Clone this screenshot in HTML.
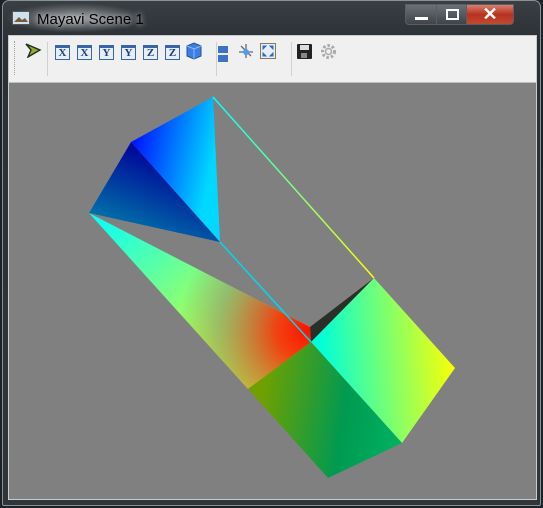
<!DOCTYPE html><html><head><style>
body{margin:0;width:543px;height:508px;background:#1c2328;position:relative;overflow:hidden;font-family:"Liberation Sans",sans-serif}
.win{position:absolute;left:2px;top:0;width:539px;height:506px;border-radius:7px 7px 2px 2px;background:linear-gradient(#3a3f44,#2b3035 40px,#30353a);border:1px solid #8a9096;box-sizing:border-box}
.title{position:absolute;left:34px;top:10px;font-size:15px;color:#000;text-shadow:0 0 6px rgba(255,255,255,.9)}
.glow{position:absolute;left:2px;top:2px;width:140px;height:30px;background:radial-gradient(ellipse at center,rgba(255,255,255,.5),rgba(255,255,255,0) 70%)}
.client{position:absolute;left:8px;top:35px;width:527px;height:463px;border:1px solid #c8ccd0;background:#808080}
.tb{position:absolute;left:0;top:0;width:527px;height:46px;background:#f0f0f0;border-bottom:1px solid #c0c0c0}
.sep{position:absolute;top:6px;width:1px;height:34px;background:#d0d0d0}
.ib{position:absolute;top:9px;width:13px;height:13px;border:1px solid #3a64a8;background:#e8eef8;font:bold 11px "Liberation Serif",serif;color:#1c3f80;text-align:center;line-height:15px;box-sizing:content-box}
.ib:before{content:"";position:absolute;left:0;top:0;right:0;height:2px;background:#3a64a8}
.btn{position:absolute;top:3px;height:21px;border:1px solid #5a5e62;box-sizing:border-box}
</style></head><body>
<div class="win">
<div class="glow"></div>
<svg style="position:absolute;left:9px;top:10px" width="18" height="14"><rect x=".5" y=".5" width="17" height="13" fill="#cfe0f0" stroke="#555"/><path d="M2 11 L7 6 L10 9 L13 7 L16 11Z" fill="#7a5a3a"/></svg>
<div class="title">Mayavi Scene 1</div>
<div class="btn" style="left:402px;width:32px;border-radius:0 0 0 4px;background:linear-gradient(#6a7076,#3e4449)"><div style="position:absolute;left:9px;top:12px;width:13px;height:3px;background:#fff"></div></div>
<div class="btn" style="left:433px;width:31px;background:linear-gradient(#6a7076,#3e4449)"><div style="position:absolute;left:9px;top:4px;width:9px;height:7px;border:2px solid #fff"></div></div>
<div class="btn" style="left:463px;width:48px;border-radius:0 0 4px 0;background:linear-gradient(#d88070,#b8321e 50%,#c04a30)"><div style="position:absolute;left:0;width:100%;top:-1px;color:#fff;font:bold 18px 'Liberation Sans';text-align:center">✕</div></div>
</div>
<div class="client">
<div class="tb">
<div style="position:absolute;left:5px;top:5px;width:1px;height:34px;border-left:1px dotted #a0a0a0"></div>
<svg style="position:absolute;left:15px;top:6px" width="18" height="16"><path d="M2 2 L16 8 L4 15 L7 8Z" fill="#9aa830" stroke="#1a3020" stroke-width="1.4"/></svg>
<div class="sep" style="left:38px"></div>
<div class="ib" style="left:46px">X</div><div class="ib" style="left:68px">X</div><div class="ib" style="left:90px">Y</div><div class="ib" style="left:112px">Y</div><div class="ib" style="left:134px">Z</div><div class="ib" style="left:156px">Z</div>
<svg style="position:absolute;left:176px;top:6px" width="18" height="18"><path d="M2 4 L9 1 L16 4 L16 14 L9 17 L2 14Z" fill="#3f7ee0" stroke="#2050a0"/><path d="M2 4 L9 7 L16 4 M9 7 V17" stroke="#8ab8ff" fill="none"/></svg>
<div class="sep" style="left:207px"></div>
<div style="position:absolute;left:209px;top:10px;width:10px;height:7px;background:#3d72c8"></div><div style="position:absolute;left:209px;top:19px;width:10px;height:7px;background:#3d72c8"></div>
<svg style="position:absolute;left:229px;top:7px" width="16" height="16"><path d="M8 1V15M1 9H15M3 3L13 13" stroke="#667" stroke-width="1.3"/><circle cx="8" cy="9" r="3" fill="#4aa0f0"/></svg>
<svg style="position:absolute;left:251px;top:7px" width="16" height="16"><rect x=".5" y=".5" width="15" height="15" fill="#e8eef8" stroke="#8a7a50"/><path d="M3 3L6 3L3 6ZM13 3L10 3L13 6ZM3 13L6 13L3 10ZM13 13L10 13L13 10Z" fill="#2a6ac0" stroke="#2a6ac0"/></svg>
<div class="sep" style="left:282px"></div>
<svg style="position:absolute;left:288px;top:8px" width="15" height="15"><rect width="15" height="15" rx="1" fill="#222"/><rect x="3" y="1" width="9" height="5" fill="#ddd"/><rect x="4" y="9" width="6" height="5" fill="#888"/></svg>
<svg style="position:absolute;left:311px;top:7px" width="17" height="17"><circle cx="8.5" cy="8.5" r="6" fill="none" stroke="#aaa" stroke-width="3" stroke-dasharray="2.5 2"/><circle cx="8.5" cy="8.5" r="3" fill="none" stroke="#aaa" stroke-width="1.5"/></svg>
</div>
</div>
<svg style="position:absolute;left:0;top:0" width="543" height="508">
<defs>
<linearGradient id="pt" x1="131" y1="142" x2="213" y2="160" gradientUnits="userSpaceOnUse"><stop offset="0" stop-color="#0010ff"/><stop offset="1" stop-color="#00d8ff"/></linearGradient>
<linearGradient id="pl" x1="131" y1="150" x2="100" y2="225" gradientUnits="userSpaceOnUse"><stop offset="0" stop-color="#000c9a"/><stop offset="1" stop-color="#007aaa"/></linearGradient>
<linearGradient id="lg" x1="89" y1="213" x2="248" y2="389" gradientUnits="userSpaceOnUse"><stop offset="0" stop-color="#00ffff"/><stop offset="1" stop-color="#ffff00"/></linearGradient>
<radialGradient id="rd" cx="308" cy="330" r="130" gradientUnits="userSpaceOnUse"><stop offset="0" stop-color="#ff1000"/><stop offset=".25" stop-color="#f03010" stop-opacity=".9"/><stop offset=".7" stop-color="#808080" stop-opacity=".5"/><stop offset="1" stop-color="#808080" stop-opacity="0"/></radialGradient>
<linearGradient id="ct" x1="320" y1="340" x2="455" y2="330" gradientUnits="userSpaceOnUse"><stop offset="0" stop-color="#00ffd8"/><stop offset="1" stop-color="#ffff00"/></linearGradient>
<linearGradient id="cf" x1="260" y1="400" x2="400" y2="420" gradientUnits="userSpaceOnUse"><stop offset="0" stop-color="#70a000"/><stop offset=".6" stop-color="#009a50"/><stop offset="1" stop-color="#00b060"/></linearGradient>
<linearGradient id="ae" x1="213" y1="97" x2="374" y2="278" gradientUnits="userSpaceOnUse"><stop offset="0" stop-color="#00ffff"/><stop offset="1" stop-color="#ffff00"/></linearGradient>
</defs>
<polygon points="131,142 213,97 220,242" fill="url(#pt)"/>
<polygon points="131,142 89,213 220,242" fill="url(#pl)"/>
<polygon points="89,213 310,327 311,342 248,389" fill="url(#lg)"/>
<polygon points="89,213 310,327 311,342 248,389" fill="url(#rd)"/>
<polygon points="310,327 374,278 311,342" fill="#2a3028"/>
<polygon points="311,342 374,278 455,368 402,443" fill="url(#ct)"/>
<polygon points="248,389 311,342 402,443 328,478" fill="url(#cf)"/>
<line x1="213" y1="97" x2="374" y2="278" stroke="url(#ae)" stroke-width="1.5"/>
<line x1="220" y1="242" x2="311" y2="342" stroke="#00d8f0" stroke-width="1.5"/>
</svg>
</body></html>
